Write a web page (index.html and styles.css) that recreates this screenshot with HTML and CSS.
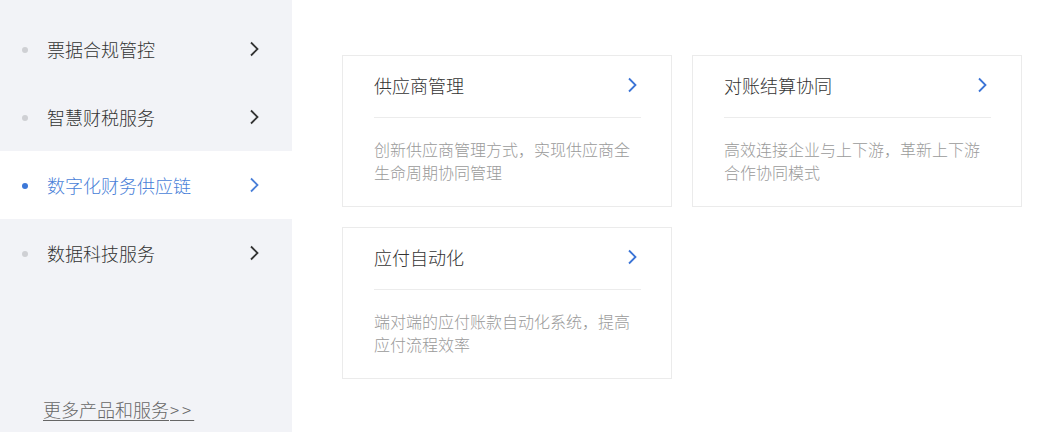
FILE: index.html
```html
<!DOCTYPE html>
<html lang="zh-CN">
<head>
<meta charset="utf-8">
<link rel="stylesheet" href="styles.css">
</head>
<body>
<div class="page">
  <aside class="side">
    <ul class="menu">
      <li class="item"><span class="dot"></span><span class="label">票据合规管控</span><svg class="chev" viewBox="0 0 10 16" width="10" height="16"><path d="M2 1.5 L8.5 8 L2 14.5" /></svg></li>
      <li class="item"><span class="dot"></span><span class="label">智慧财税服务</span><svg class="chev" viewBox="0 0 10 16" width="10" height="16"><path d="M2 1.5 L8.5 8 L2 14.5" /></svg></li>
      <li class="item active"><span class="dot"></span><span class="label">数字化财务供应链</span><svg class="chev" viewBox="0 0 10 16" width="10" height="16"><path d="M2 1.5 L8.5 8 L2 14.5" /></svg></li>
      <li class="item"><span class="dot"></span><span class="label">数据科技服务</span><svg class="chev" viewBox="0 0 10 16" width="10" height="16"><path d="M2 1.5 L8.5 8 L2 14.5" /></svg></li>
    </ul>
    <a class="more" href="#">更多产品和服务<span class="gt">&gt;&gt;</span></a>
  </aside>
  <main class="main">
    <div class="grid">
      <div class="card">
        <div class="card-head"><span class="title">供应商管理</span><svg class="chev blue" viewBox="0 0 10 16" width="10" height="16"><path d="M2 1.5 L8.5 8 L2 14.5" /></svg></div>
        <p class="desc">创新供应商管理方式，实现供应商全生命周期协同管理</p>
      </div>
      <div class="card">
        <div class="card-head"><span class="title">对账结算协同</span><svg class="chev blue" viewBox="0 0 10 16" width="10" height="16"><path d="M2 1.5 L8.5 8 L2 14.5" /></svg></div>
        <p class="desc">高效连接企业与上下游，革新上下游合作协同模式</p>
      </div>
      <div class="card">
        <div class="card-head"><span class="title">应付自动化</span><svg class="chev blue" viewBox="0 0 10 16" width="10" height="16"><path d="M2 1.5 L8.5 8 L2 14.5" /></svg></div>
        <p class="desc">端对端的应付账款自动化系统，提高应付流程效率</p>
      </div>
    </div>
  </main>
</div>
</body>
</html>
```

FILE: styles.css
```css
* { box-sizing: border-box; }
html, body { margin: 0; padding: 0; background: #fff; }
body {
  font-family: "Noto Sans CJK SC", "Noto Sans", sans-serif;
  font-weight: 300;
  color: #333;
}
.page {
  display: flex;
  width: 1050px;
  height: 432px;
  overflow: hidden;
}
.side {
  width: 292px;
  flex: none;
  background: #f2f3f7;
  display: flex;
  flex-direction: column;
  padding-top: 15px;
}
.menu {
  list-style: none;
  margin: 0;
  padding: 0;
}
.item {
  height: 68px;
  display: flex;
  align-items: center;
  padding-left: 22px;
  padding-right: 33px;
  font-size: 18px;
  color: #333;
}
.dot {
  width: 6px;
  height: 6px;
  border-radius: 50%;
  background: #cfd0d4;
  margin-right: 19px;
  margin-top: 2px;
}
.label { flex: 1; }
.chev {
  fill: none;
  stroke: #333;
  stroke-width: 1.8;
}
.item.active { background: #fff; color: #4a7fd8; }
.item.active .dot { background: #3c78d8; }
.item.active .chev { stroke: #4a7fd8; }
.more {
  margin-top: auto;
  margin-bottom: 10px;
  margin-left: 43px;
  margin-right: auto;
  font-size: 18px;
  color: #666;
  text-decoration: underline;
  text-underline-offset: 3px;
  line-height: 24px;
}
.gt {
  letter-spacing: 3px;
  margin-left: 1px;
  font-size: 17px;
}
.main {
  flex: 1;
  padding: 55px 0 0 50px;
}
.grid {
  display: grid;
  grid-template-columns: 330px 330px;
  gap: 20px;
}
.card {
  border: 1px solid #ebebeb;
  padding: 0 30px 22px 31px;
  background: #fff;
}
.card-head {
  height: 62px;
  display: flex;
  align-items: center;
  justify-content: space-between;
  border-bottom: 1px solid #ececec;
  padding-right: 4px;
  padding-bottom: 3px;
}
.title { font-size: 18px; color: #333; }
.chev.blue { stroke: #3b74d6; }
.desc {
  margin: 20px 0 0;
  font-size: 16px;
  line-height: 23px;
  color: #9a9a9a;
}
```
